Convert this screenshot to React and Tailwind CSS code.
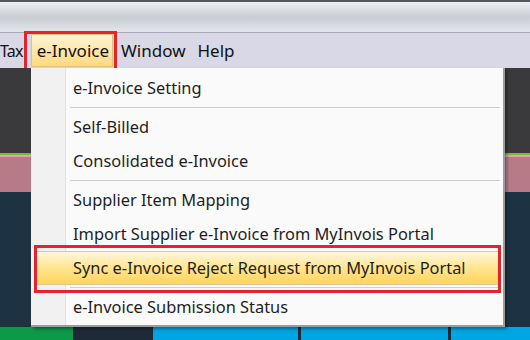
import React from "react";

const font = { fontFamily: '"Noto Sans", "Open Sans", sans-serif' };

const Row = ({ label, active }) =>
  active ? (
    <div className="h-[34px] mx-[4px] pl-[37px] flex items-center text-[16.4px] text-[#1e1e1e] border border-[#d8c9a3] bg-gradient-to-b from-[#fff6dc] via-[#ffe58e] to-[#ffd45a]">
      {label}
    </div>
  ) : (
    <div className="h-[34px] pl-[42px] flex items-center text-[16.4px] text-[#1e1e1e]">
      {label}
    </div>
  );

const Sep = () => (
  <div className="h-[5px] flex items-center pl-[39px] pr-[3px]">
    <div className="h-[2px] w-full border-t border-[#cfcfcf] border-b-white" />
  </div>
);

const App = () => {
  return (
    <div className="w-[530px] h-[340px] flex flex-col overflow-hidden bg-[#d8d8e6]" style={font}>
      {/* title strip */}
      <div className="h-[2px] bg-[#55575e]" />
      <div className="h-[30px] bg-gradient-to-b from-[#eef0f3] via-[#c9ccd3] to-[#e2e5ec]" />
      <div className="h-[1px] bg-[#a9a9b9]" />

      {/* menu bar */}
      <div className="relative h-[35px] flex items-center text-[17px] text-[#111] bg-[#d8d8e6]">
        <span className="text-[16px] tracking-[-0.8px]">Tax</span>
        <span className="ml-[8px] h-[33px] pl-[5px] pr-[3px] flex items-center border border-[#e0c27a] bg-gradient-to-b from-[#fff4d6] to-[#ffd97a]">
          e-Invoice
        </span>
        <span className="ml-[8px]">Window</span>
        <span className="ml-[12px]">Help</span>
        <div className="absolute left-[24px] top-[-2px] w-[93px] h-[42px] border-[3px] border-[#e5232b]" />
      </div>

      {/* workspace */}
      <div className="relative flex-1 flex flex-col">
        <div className="h-[85px] bg-[#3a3a3c]" />
        <div className="h-[2px] bg-[#7cbb3a]" />
        <div className="h-[2px] bg-[#e3a3ae]" />
        <div className="h-[35px] bg-[#b67b87]" />
        <div className="flex-1 bg-[#1d3344]" />

        {/* dropdown */}
        <div className="absolute left-[31px] top-0 w-[474px] h-[259px] bg-[#fafafa] border-r-2 border-b-2 border-[#9c9c9c] shadow-[2px_2px_3px_rgba(0,0,0,0.35)]">
          <div className="absolute left-0 top-0 bottom-0 w-[35px] bg-[#f1f1f1] border-r border-[#e2e2e2]" />
          <div className="relative pt-[3px]">
            <Row label="e-Invoice Setting" />
            <Sep />
            <Row label="Self-Billed" />
            <Row label="Consolidated e-Invoice" />
            <Sep />
            <Row label="Supplier Item Mapping" />
            <Row label="Import Supplier e-Invoice from MyInvois Portal" />
            <Row label="Sync e-Invoice Reject Request from MyInvois Portal" active />
            <Sep />
            <Row label="e-Invoice Submission Status" />
          </div>
          <div className="absolute left-[3px] top-[177px] w-[467px] h-[48px] border-[3px] border-[#e5232b]" />
        </div>
      </div>

      {/* taskbar */}
      <div className="h-[13px] flex">
        <div className="w-[73px] bg-[#0c9a48]" />
        <div className="w-[80px] bg-[#1e2a38]" />
        <div className="w-[145px] bg-[#00a5e3]" />
        <div className="w-[3px] bg-[#1e2a38]" />
        <div className="w-[147px] bg-[#00a5e3]" />
        <div className="w-[3px] bg-[#1e2a38]" />
        <div className="flex-1 bg-[#00a5e3]" />
      </div>
    </div>
  );
};

export default App;
